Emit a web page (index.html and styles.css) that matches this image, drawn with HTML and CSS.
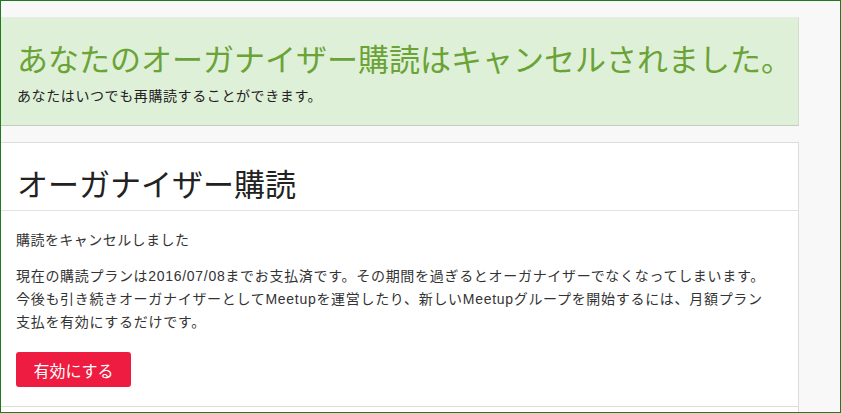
FILE: index.html
```html
<!DOCTYPE html>
<html lang="ja">
<head>
<meta charset="utf-8">
<title>オーガナイザー購読</title>
<link rel="stylesheet" href="styles.css">
</head>
<body>
<div class="frame">
  <main class="main">
    <section class="alert">
      <h1 class="alert-title">あなたのオーガナイザー購読はキャンセルされました。</h1>
      <p class="alert-text">あなたはいつでも再購読することができます。</p>
    </section>
    <section class="card">
      <header class="card-header">
        <h2 class="card-title">オーガナイザー購読</h2>
      </header>
      <div class="card-body">
        <p class="status">購読をキャンセルしました</p>
        <p class="desc">現在の購読プランは2016/07/08までお支払済です。その期間を過ぎるとオーガナイザーでなくなってしまいます。<br>今後も引き続きオーガナイザーとしてMeetupを運営したり、新しいMeetupグループを開始するには、月額プラン<br>支払を有効にするだけです。</p>
        <button class="btn" type="button">有効にする</button>
      </div>
      <div class="card-footer"></div>
    </section>
  </main>
</div>
</body>
</html>
```

FILE: styles.css
```css
html, body {
  margin: 0;
  padding: 0;
}

body {
  font-family: "Noto Sans CJK JP", "Noto Sans", sans-serif;
  color: #333;
}

.frame {
  box-sizing: border-box;
  width: 841px;
  height: 413px;
  border: 1px solid #1f7a1f;
  background: #f8f8f8;
  overflow: hidden;
}

.main {
  width: 798px;
  padding-top: 16px;
}

.alert {
  background: #dff0d8;
  padding: 20px 16px 20px 16px;
  border-right: 1px solid #d3dccf;
  border-bottom: 1px solid #c3ccc0;
  border-top: 1px solid #e6ece3;
}

.alert-title {
  margin: 0;
  font-size: 31px;
  line-height: 40px;
  font-weight: 400;
  color: #6aa336;
  white-space: nowrap;
}

.alert-text {
  margin: 7px 0 0 0;
  font-size: 14px;
  line-height: 20px;
  letter-spacing: 0.6px;
  color: #222;
}

.card {
  margin-top: 16px;
  background: #fff;
  border: 1px solid #dcdcdc;
  border-left: none;
}

.card-header {
  padding: 20px 16px 7px 16px;
  border-bottom: 1px solid #e2e2e2;
}

.card-title {
  margin: 0;
  font-size: 31px;
  line-height: 40px;
  font-weight: 400;
  color: #222;
}

.card-body {
  padding: 18px 16px 19px 15px;
  font-family: "Liberation Sans", "Noto Sans CJK JP", sans-serif;
  font-size: 14px;
  letter-spacing: 0.45px;
  color: #333;
}

.status {
  margin: 0;
  line-height: 23px;
}

.desc {
  margin: 13px 0 0 0;
  line-height: 23px;
  letter-spacing: 0.7px;
  white-space: nowrap;
}

.btn {
  margin-top: 18px;
  display: block;
  height: 35px;
  width: 115px;
  border: none;
  border-radius: 3px;
  background: #ed1c40;
  color: #fff;
  font-family: "Noto Sans CJK JP", "Noto Sans", sans-serif;
  font-size: 16px;
  letter-spacing: 0;
  padding: 0;
}

.card-footer {
  height: 20px;
  border-top: 1px solid #dcdcdc;
  background: #fff;
}
```
